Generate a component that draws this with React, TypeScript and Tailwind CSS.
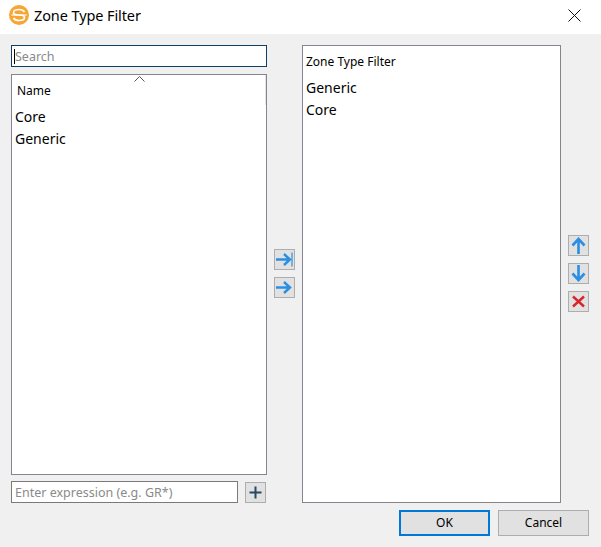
import React from 'react';

const font = "font-['Noto_Sans',sans-serif]";

const ToolButton: React.FC<{ children: React.ReactNode }> = ({ children }) => (
  <button className="flex h-[21px] w-[21px] items-center justify-center border border-[#adadad] bg-[#e1e1e1]">
    {children}
  </button>
);

const ArrowRight: React.FC<{ bar?: boolean }> = ({ bar }) => (
  <svg width="19" height="19" viewBox="0 0 19 19" fill="none">
    <path d="M1 9.5H14M9 4l6 5.500L9 15" stroke="#2a8fe3" strokeWidth="2.4" />
    {bar && <path d="M17 2.500V16.500" stroke="#2a8fe3" strokeWidth="1.2" />}
  </svg>
);

const ArrowUp = () => (
  <svg width="19" height="19" viewBox="0 0 19 19" fill="none">
    <path d="M9.500 18V3M3.500 9.500L9.500 3l6 6.500" stroke="#2a8fe3" strokeWidth="2.6" />
  </svg>
);

const ArrowDown = () => (
  <svg width="19" height="19" viewBox="0 0 19 19" fill="none">
    <path d="M9.500 1V16M3.500 9.500l6 6.500 6-6.500" stroke="#2a8fe3" strokeWidth="2.6" />
  </svg>
);

const App: React.FC = () => {
  return (
    <div className={`flex h-[547px] w-[601px] flex-col overflow-hidden bg-[#f0f0f0] text-[#000] ${font}`}>
      {/* title bar */}
      <div className="flex h-[34px] items-center bg-white pb-[4px] pl-[9px] pr-[20px]">
        <svg width="20" height="20" viewBox="0 0 20 20" fill="none">
          <circle cx="10" cy="10" r="10" fill="#f7a533" />
          <path
            d="M15.500 7C14.500 5 12 4.500 10 4.500C7 4.500 4.500 5.500 4.500 7.500C4.500 9.500 7 10 10 10C13 10 15.500 10.500 15.500 12.500C15.500 14.500 13 15.500 10 15.500C8 15.500 5.500 15 4.500 13"
            stroke="#fff"
            strokeWidth="1.700"
          />
          <path d="M2.500 10h15" stroke="#fff" strokeWidth="1.200" />
        </svg>
        <span className="ml-[5px] text-[14.500px] leading-none tracking-[-0.1px]">Zone Type Filter</span>
        <svg className="ml-auto" width="13" height="13" viewBox="0 0 13 13" fill="none">
          <path d="M0.500 0.500L12.500 12.500M12.500 0.500L0.500 12.500" stroke="#111" strokeWidth="1" />
        </svg>
      </div>

      <div className="flex flex-1 flex-col pl-[11px] pr-[12px] pt-[11px]">
        <div className="flex h-[458px]">
          {/* left column */}
          <div className="flex w-[256px] flex-col">
            <div className="flex h-[22px] items-center border border-[#0f3f66] bg-white pl-[2px]">
              <span className="h-[15px] w-px bg-black" />
              <span className="pt-[2px] text-[12.500px] leading-none text-[#8a8a8a]">Search</span>
            </div>
            <div className="relative mt-[7px] h-[401px] border border-[#85858f] bg-white">
              <svg className="absolute left-[122px] top-px" width="11" height="6" viewBox="0 0 11 6" fill="none">
                <path d="M0.500 5.500L5.500 0.500L10.500 5.500" stroke="#555" strokeWidth="1" />
              </svg>
              <div className="absolute right-0 top-0 h-[30px] w-px bg-[#e5e5e5]" />
              <div className="flex h-[25px] items-end pl-[5px] text-[12px] leading-[18px]">Name</div>
              <div className="mt-[6px] pl-[3px] text-[14px] leading-[22px]">
                <div>Core</div>
                <div>Generic</div>
              </div>
            </div>
            <div className="mt-[6px] flex h-[22px] items-center">
              <div className="flex h-[22px] w-[227px] items-center border border-[#7a7a7a] bg-white pl-[3px] pt-[2px] text-[12.500px] leading-none text-[#8a8a8a]">
                Enter expression (e.g. GR*)
              </div>
              <div className="ml-[7px]">
                <ToolButton>
                  <svg width="13" height="13" viewBox="0 0 13 13" fill="none">
                    <path d="M6.500 0.500V12.500M0.500 6.500H12.500" stroke="#264a60" strokeWidth="2" />
                  </svg>
                </ToolButton>
              </div>
            </div>
          </div>

          {/* transfer buttons */}
          <div className="ml-[7px] flex w-[21px] flex-col gap-[7px] pt-[204px]">
            <ToolButton><ArrowRight bar /></ToolButton>
            <ToolButton><ArrowRight /></ToolButton>
          </div>

          {/* right list */}
          <div className="ml-[7px] h-[458px] w-[259px] border border-[#85858f] bg-white pl-[3px]">
            <div className="pt-[7px] text-[12px] leading-[18px]">Zone Type Filter</div>
            <div className="mt-[6px] text-[14px] leading-[22px]">
              <div>Generic</div>
              <div>Core</div>
            </div>
          </div>

          {/* order buttons */}
          <div className="ml-[7px] flex w-[21px] flex-col gap-[7px] pt-[190px]">
            <ToolButton><ArrowUp /></ToolButton>
            <ToolButton><ArrowDown /></ToolButton>
            <ToolButton>
              <svg width="13" height="13" viewBox="0 0 13 13" fill="none">
                <path d="M1 1.500L12 11.500M12 1.500L1 11.500" stroke="#d8252b" strokeWidth="2.400" />
              </svg>
            </ToolButton>
          </div>
        </div>

        {/* footer */}
        <div className="mt-[7px] flex justify-end gap-[8px] text-[12px]">
          <button className="h-[26px] w-[91px] border-2 border-[#0078d7] bg-[#e1e1e1]">OK</button>
          <button className="h-[26px] w-[91px] border border-[#adadad] bg-[#e1e1e1]">Cancel</button>
        </div>
      </div>
    </div>
  );
};

export default App;
